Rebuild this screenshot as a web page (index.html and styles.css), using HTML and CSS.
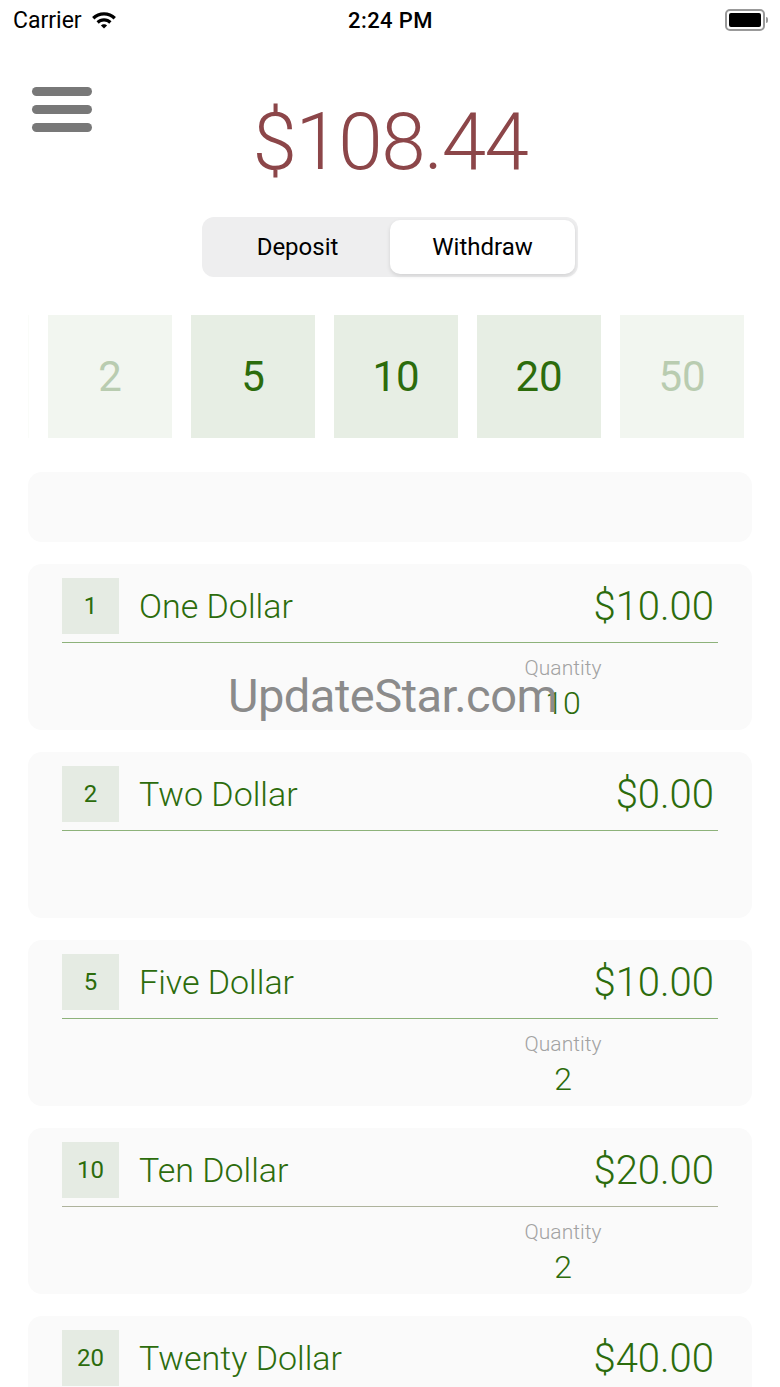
FILE: index.html
```html
<!DOCTYPE html>
<html lang="en">

<head>
    <meta charset="UTF-8">
    <meta name="viewport" content="width=device-width, initial-scale=1.0">
    <title>Cash Counter</title>
    <link rel="stylesheet" href="styles.css">
</head>

<body>
    <!-- Status bar -->
    <div class="status">
        <div class="status-left">
            <span>Carrier</span>
            <svg class="wifi" width="28" height="20" viewBox="0 0 28 20">
                <path d="M14 3.2c4.6 0 8.8 1.8 11.9 4.8l-2.3 2.4C21 7.9 17.7 6.5 14 6.5S7 7.9 4.4 10.4L2.1 8C5.2 5 9.4 3.2 14 3.2z" fill="#000"/>
                <path d="M14 9.3c2.9 0 5.5 1.1 7.5 3l-2.3 2.4c-1.4-1.3-3.2-2.1-5.2-2.1s-3.8.8-5.2 2.1l-2.3-2.4c2-1.9 4.6-3 7.5-3z" fill="#000"/>
                <path d="M14 15.2c1.2 0 2.3.5 3.1 1.2L14 19.6l-3.1-3.2c.8-.7 1.9-1.2 3.1-1.2z" fill="#000"/>
            </svg>
        </div>
        <div class="status-time">2:24 PM</div>
        <div class="status-right">
            <div class="battery"><div class="battery-fill"></div></div>
            <div class="battery-nub"></div>
        </div>
    </div>

    <!-- Header -->
    <div class="header">
        <div class="menu">
            <span></span>
            <span></span>
            <span></span>
        </div>
        <div class="total">$108.44</div>
        <div></div>
    </div>

    <div class="segment-wrap">
        <div class="segment">
            <div class="seg">Deposit</div>
            <div class="seg active">Withdraw</div>
        </div>
    </div>

    <!-- Denomination picker -->
    <div class="picker">
        <div class="picker-row">
            <div class="tile ghost">1</div>
            <div class="tile faded">2</div>
            <div class="tile">5</div>
            <div class="tile">10</div>
            <div class="tile">20</div>
            <div class="tile faded">50</div>
            <div class="tile ghost">100</div>
        </div>
    </div>

    <div class="list">
        <div class="card empty"></div>

        <div class="card">
            <div class="card-top">
                <div class="badge">1</div>
                <div class="name">One Dollar</div>
                <div class="amount">$10.00</div>
            </div>
            <div class="qty">
                <div class="qty-label">Quantity</div>
                <div class="qty-value">10</div>
            </div>
        </div>

        <div class="card">
            <div class="card-top">
                <div class="badge">2</div>
                <div class="name">Two Dollar</div>
                <div class="amount">$0.00</div>
            </div>
            <div class="qty"></div>
        </div>

        <div class="card">
            <div class="card-top">
                <div class="badge">5</div>
                <div class="name">Five Dollar</div>
                <div class="amount">$10.00</div>
            </div>
            <div class="qty">
                <div class="qty-label">Quantity</div>
                <div class="qty-value">2</div>
            </div>
        </div>

        <div class="card">
            <div class="card-top gray-line">
                <div class="badge">10</div>
                <div class="name">Ten Dollar</div>
                <div class="amount">$20.00</div>
            </div>
            <div class="qty">
                <div class="qty-label">Quantity</div>
                <div class="qty-value">2</div>
            </div>
        </div>

        <div class="card">
            <div class="card-top">
                <div class="badge">20</div>
                <div class="name">Twenty Dollar</div>
                <div class="amount">$40.00</div>
            </div>
            <div class="qty">
                <div class="qty-label">Quantity</div>
                <div class="qty-value">2</div>
            </div>
        </div>
    </div>

    <!-- watermark -->
    <div class="watermark">UpdateStar.com</div>
</body>

</html>
```

FILE: styles.css
```css
body {
    margin: 0;
    width: 780px;
    height: 1387px;
    overflow: hidden;
    background: #fff;
    font-family: Roboto, "Liberation Sans", sans-serif;
    position: relative;
}

/* status bar */
.status {
    height: 40px;
    display: flex;
    align-items: center;
    justify-content: space-between;
    padding: 0 12px 0 13px;
    font-size: 23px;
    color: #000;
}

.status-left {
    display: flex;
    align-items: center;
    gap: 8px;
    width: 200px;
}

.wifi {
    margin-top: -2px;
}

.status-time {
    font-weight: 500;
    font-size: 22px;
    letter-spacing: 0.4px;
}

.status-right {
    width: 200px;
    display: flex;
    justify-content: flex-end;
    align-items: center;
}

.battery {
    height: 14px;
    border: 2px solid #999;
    border-radius: 5px;
    padding: 2px;
    box-sizing: content-box;
    width: 32px;
}

.battery-fill {
    width: 100%;
    height: 100%;
    background: #000;
    border-radius: 2px;
}

.battery-nub {
    width: 2px;
    height: 6px;
    background: #999;
    border-radius: 0 2px 2px 0;
    margin-left: 1px;
}

/* header */
.header {
    display: grid;
    grid-template-columns: 1fr auto 1fr;
    height: 177px;
}

.menu {
    padding: 47px 0 0 32px;
    display: flex;
    flex-direction: column;
    gap: 9px;
}

.menu span {
    display: block;
    width: 60px;
    height: 9px;
    border-radius: 5px;
    background: #787878;
}

.total {
    font-size: 80px;
    font-weight: 300;
    color: #8c4649;
    letter-spacing: -1.5px;
    padding-top: 62px;
    line-height: 1;
}

.segment-wrap {
    display: flex;
    justify-content: center;
}

.segment {
    width: 376px;
    height: 60px;
    box-sizing: border-box;
    background: #eeeeef;
    border-radius: 12px;
    padding: 3px;
    display: flex;
}

.seg {
    flex: 1;
    display: flex;
    align-items: center;
    justify-content: center;
    font-size: 24px;
    color: #000;
    border-radius: 10px;
}

.seg.active {
    background: #fff;
    box-shadow: 0 2px 4px rgba(0, 0, 0, 0.12);
}

/* picker */
.picker {
    margin: 38px 28px 0;
    overflow: hidden;
}

.picker-row {
    display: flex;
    gap: 19px;
    margin-left: -123px;
}

.tile {
    flex: 0 0 124px;
    height: 123px;
    background: #e7eee4;
    color: #2c6c0c;
    font-size: 42px;
    display: flex;
    align-items: center;
    justify-content: center;
}

.tile.faded {
    background: #f2f6f0;
    color: #b9ccb0;
}

.tile.ghost {
    background: #fafcf9;
    color: #eef3ec;
}

/* cards */
.list {
    padding: 34px 28px 0;
    display: flex;
    flex-direction: column;
    gap: 22px;
}

.card {
    background: #fafafa;
    border-radius: 14px;
    height: 166px;
    box-sizing: border-box;
    padding: 14px 34px 0;
}

.card.empty {
    height: 70px;
}

.card-top {
    display: flex;
    align-items: center;
    padding-bottom: 8px;
    border-bottom: 1px solid #8db27a;
}

.card-top.gray-line {
    border-bottom-color: #aeb39c;
}

.badge {
    width: 57px;
    height: 56px;
    background: #e5ebe3;
    color: #2c6c0c;
    font-size: 24px;
    display: flex;
    align-items: center;
    justify-content: center;
}

.name {
    margin-left: 20px;
    font-size: 34px;
    font-weight: 300;
    color: #2c6c0c;
    flex: 1;
}

.amount {
    font-size: 40px;
    font-weight: 300;
    color: #2c6c0c;
    margin-right: 4px;
}

.qty {
    width: 200px;
    margin-left: 401px;
    text-align: center;
    padding-top: 12px;
}

.qty-label {
    font-size: 21px;
    font-weight: 300;
    color: #a2a2a2;
    line-height: 26px;
}

.qty-value {
    font-size: 32px;
    font-weight: 300;
    color: #2c6c0c;
    line-height: 44px;
}

.watermark {
    position: absolute;
    left: 228px;
    top: 668px;
    font-size: 47px;
    color: #8b8b8b;
    letter-spacing: -0.5px;
}
```
